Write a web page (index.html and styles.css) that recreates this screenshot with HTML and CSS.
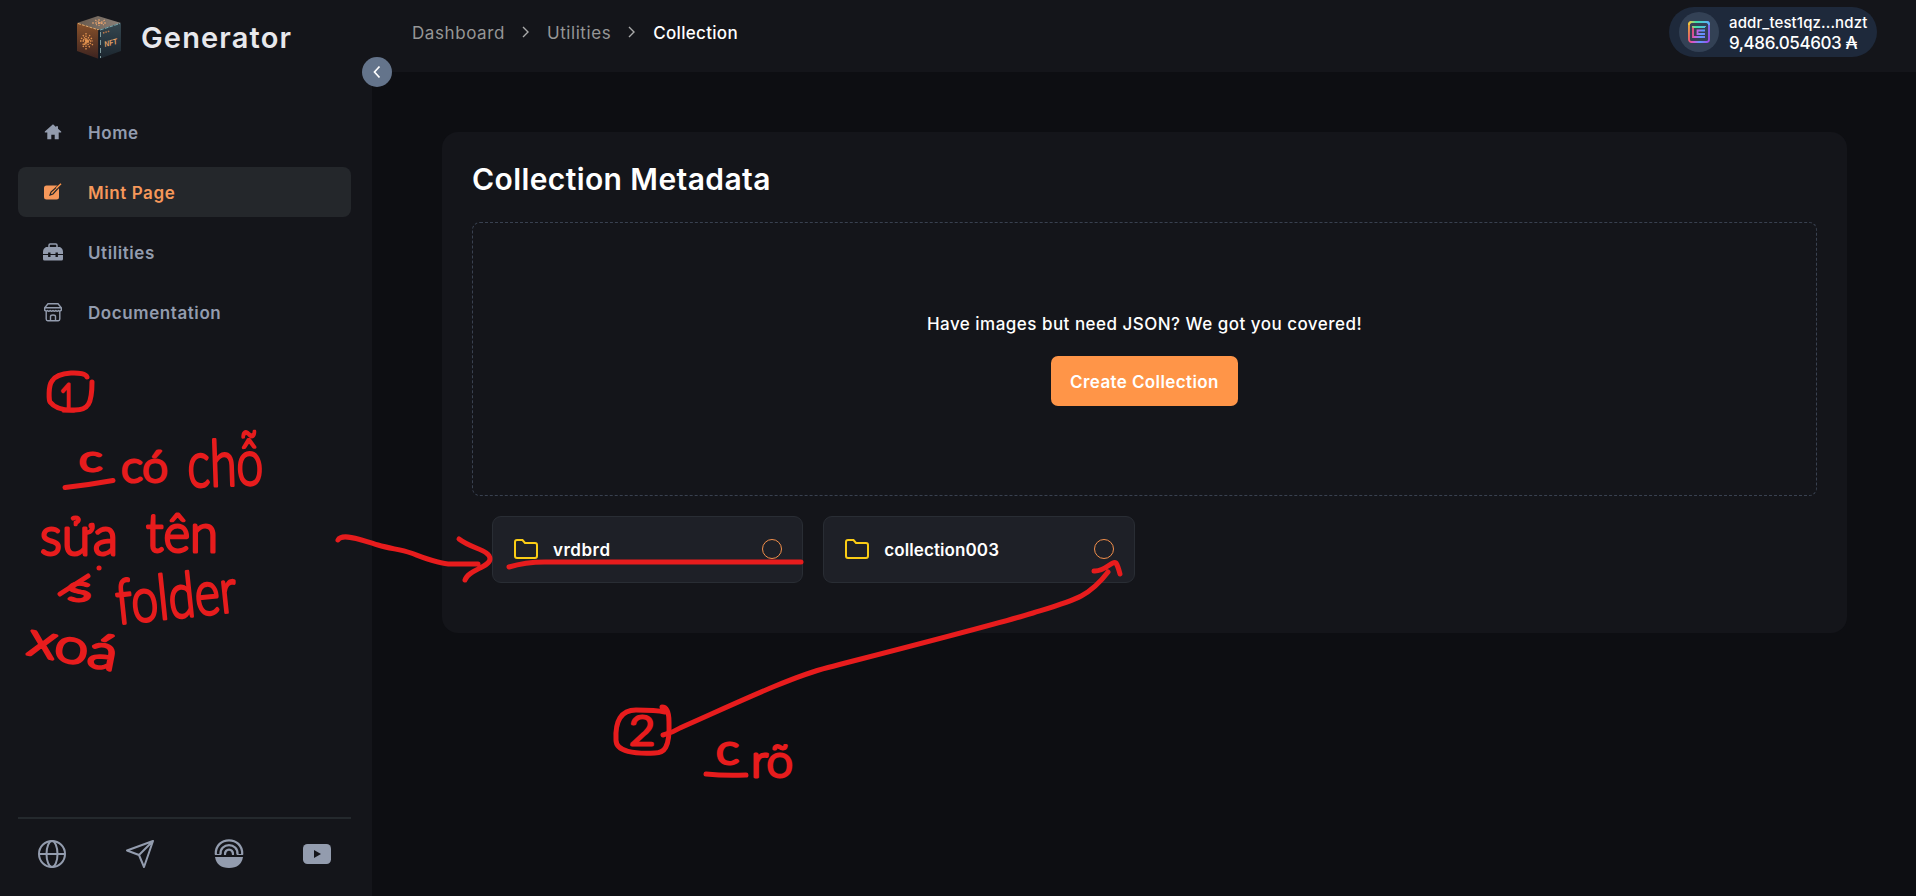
FILE: index.html
```html
<!DOCTYPE html>
<html lang="en">
<head>
<meta charset="utf-8">
<title>Generator</title>
<link rel="stylesheet" href="styles.css">
</head>
<body>
<div class="app">
  <aside class="sidebar">
    <div class="brand">
      <svg class="cube" viewBox="0 0 44 44">
        <defs>
          <linearGradient id="left" x1="0" y1="0" x2="0" y2="1"><stop offset="0" stop-color="#88512a"/><stop offset="1" stop-color="#3c2320"/></linearGradient>
          <linearGradient id="right" x1="0" y1="0" x2="0" y2="1"><stop offset="0" stop-color="#354750"/><stop offset="1" stop-color="#1b252e"/></linearGradient>
          <linearGradient id="top"><stop offset="0" stop-color="#66584c"/><stop offset="1" stop-color="#8b8179"/></linearGradient>
        </defs>
        <path d="M0 7L21 0 44 7 22 14z" fill="url(#top)"/>
        <path d="M0 7l22 7v29L0 35z" fill="url(#left)"/>
        <path d="M44 7l-22 7v29l22-8z" fill="url(#right)"/>
        <path d="M1 7.500l21 6.500" stroke="#e2ad72" stroke-dasharray="3 1"/>
        <path d="M23 14l20-6.500" stroke="#79a8ad" stroke-dasharray="4 1"/>
        <path d="M22 14v29" stroke="#071420" stroke-width="1.500"/>
        <path d="M23.500 16v26" stroke="#7f9a9c" stroke-dasharray="5 3"/>
        <path d="M3 25h13M6 19l7 13M13 19L6 31M9 17v17M4 22l12 7M15 22L5 29" stroke="#e3934f" stroke-width="1.300" stroke-dasharray="1.500 1"/>
        <path d="M15 7h15M18 4l9 5M28 4l-9 5M22 3v7" stroke="#eda56e" stroke-dasharray="2 1"/>
        <path d="M26 17l7-2" stroke="#c07a4b" stroke-width="1.500" stroke-dasharray="1.500 1"/>
        <text class="cube-label" x="28" y="31" textLength="13" lengthAdjust="spacingAndGlyphs" transform="rotate(-14 28 31)">NFT</text>
      </svg>
      <span class="brand-name">Generator</span>
    </div>
    <nav class="nav">
      <a class="nav-item"><svg class="nav-icon" viewBox="0 0 20 20" fill="currentColor"><path d="M10 2.200L1.800 9.500v.9h2.500v6.800h4v-4.400h3.400v4.400h4v-6.800h2.500v-.9l-3.200-2.800V4.300h-2v.6z"/></svg><span>Home</span></a>
      <a class="nav-item active"><svg class="nav-icon" viewBox="0 0 20 20"><rect x="1" y="3.500" width="15" height="14" rx="2.500" fill="currentColor"/><path d="M7 13l1-3 9.500-8.500 1 1L10 12z" fill="#ff9548" stroke="#24272b" stroke-width="1.200"/><path d="M13.500 6L18 1.800" stroke="#ff9548" stroke-width="1.500"/></svg><span>Mint Page</span></a>
      <a class="nav-item"><svg class="nav-icon" viewBox="0 0 20 20" fill="none"><path d="M6 5V3.200Q6 2 7.200 2h5.600Q14 2 14 3.200V5" stroke="currentColor" stroke-width="1.500"/><path d="M3 5h14q3 1.500 3 5v2H0v-2q0-3.500 3-5zM0 13h20v4q0 1.500-1.500 1.500h-17Q0 18.500 0 17z" fill="currentColor"/><path d="M6.300 10.500v4.500M13.700 10.500v4.500" stroke="#14151a" stroke-width="2.400"/></svg><span>Utilities</span></a>
      <a class="nav-item"><svg class="nav-icon" viewBox="0 0 20 20" fill="none" stroke="currentColor" stroke-width="1.400"><path d="M5 1.700h10l3.300 4v2.500q-1 1.200-2.700.4-1.400 1.200-2.800 0-1.400 1.200-2.800 0-1.400 1.200-2.800 0-1.400 1.200-2.800 0-1.700.8-2.700-.4V5.700zM2 5.700h16M3.200 9v8q0 1.700 1.500 1.700h10.600q1.500 0 1.500-1.700V9M7.500 18.500v-4q0-1.500 2.500-1.500t2.500 1.500v4"/></svg><span>Documentation</span></a>
    </nav>
    <div class="social">
      <svg class="social-icon" viewBox="0 0 28 28" fill="none" stroke="currentColor" stroke-width="2"><circle cx="14" cy="14" r="13"/><ellipse cx="14" cy="14" rx="5.500" ry="13"/><path d="M1 14h26"/></svg>
      <svg class="social-icon shift" viewBox="0 0 28 28" fill="none" stroke="currentColor" stroke-width="2" stroke-linejoin="round"><path d="M27 1L1 10.500 13 15l5 12zM27 1L13 15"/></svg>
      <svg class="social-icon wide shift" viewBox="0 0 30 30" fill="none" stroke="currentColor" stroke-width="2.300"><path d="M1.800 15.500C.8-3.300 29.200-3.300 28.200 15.500M6.500 15.500C5.500 3 24.500 3 23.500 15.500M11 15.500c-.5-6.500 8.500-6.500 8 0"/><path d="M1 15.500h6M10 15.500h2M18 15.500h2M23 15.500h6" stroke-width="1"/><path d="M1 18h28q-2 11-14 11T1 18z" fill="currentColor" stroke="none"/></svg>
      <svg class="social-icon wide" viewBox="0 0 30 30"><rect x="1" y="5" width="28" height="20" rx="4.500" fill="currentColor"/><path d="M12 11v8l7-4z" fill="#14151a"/></svg>
    </div>
    <button class="collapse"><svg viewBox="0 0 30 30" fill="none" stroke="#fff" stroke-width="1.700"><path d="M17.500 9.500L12.500 15l5 5.500"/></svg></button>
  </aside>
  <div class="content">
    <header class="topbar">
      <div class="crumbs">
        <span>Dashboard</span>
        <svg class="chevron" viewBox="0 0 8 14"><path d="M1 2l5 5-5 5"/></svg>
        <span>Utilities</span>
        <svg class="chevron" viewBox="0 0 8 14"><path d="M1 2l5 5-5 5"/></svg>
        <span class="current">Collection</span>
      </div>
      <div class="wallet">
        <div class="wallet-icon"><svg viewBox="0 0 22 22" fill="none" stroke="url(#rainbow)" stroke-width="1.800"><defs><linearGradient id="rainbow" gradientUnits="userSpaceOnUse" x1="0" y1="8" x2="22" y2="14"><stop offset="0" stop-color="#f5a83c"/><stop offset=".2" stop-color="#f4507c"/><stop offset=".42" stop-color="#c65ce0"/><stop offset=".65" stop-color="#5b9bff"/><stop offset="1" stop-color="#a24cf0"/></linearGradient><linearGradient id="rainbowTop"><stop offset="0" stop-color="#f5c83c"/><stop offset=".35" stop-color="#3fe0a8"/><stop offset="1" stop-color="#5bb0ff"/></linearGradient></defs><rect x="1" y="1" width="20" height="20" rx="2.500"/><path d="M17 6H5v10h12M17 9.500H9.500V13H17"/><path d="M1 4V3.500Q1 1 3.500 1h15Q21 1 21 3.500V4M5 6.500V6h12v.1" stroke="url(#rainbowTop)"/></svg></div>
        <div class="wallet-text"><span class="address">addr_test1qz...ndzt</span><span class="balance">9,486.054603 ₳</span></div>
      </div>
    </header>
    <main class="panel">
      <h1 class="title">Collection Metadata</h1>
      <section class="drop">
        <p class="hint">Have images but need JSON? We got you covered!</p>
        <button class="create">Create Collection</button>
      </section>
      <section class="folders">
        <div class="folder"><svg class="folder-icon" viewBox="0 0 24 20"><path d="M1 3q0-2 2-2h5.500L11 4h10q2 0 2 2v11q0 2-2 2H3q-2 0-2-2z"/></svg><span class="short-name">vrdbrd</span><i class="radio"></i></div>
        <div class="folder"><svg class="folder-icon" viewBox="0 0 24 20"><path d="M1 3q0-2 2-2h5.500L11 4h10q2 0 2 2v11q0 2-2 2H3q-2 0-2-2z"/></svg><span>collection003</span><i class="radio"></i></div>
      </section>
    </main>
  </div>
</div>
<svg class="ink" viewBox="0 0 1916 896">
  <g class="stroke">
    <path d="M87 377C85 371 58 371 52 381C48 386 49 401 50 402Q57 411 75 410C88 410 92 404 92 382"/>
    <path d="M65 487.500Q88 485 113 480.500M60 594L88 576M99 568h.1"/>
    <path d="M338 540C342 532 365 541 378 545S400 549 411 553S440 565 453 564H478M459 539C472 549 490 550 490 559C490 567 468 570 465 580"/>
    <path d="M509 567Q525 562 545 562H801"/>
    <path d="M662 707Q669 707 669 722C670 748 664 753 655 753C635 754 616 752 616 740C615 721 621 710 636 710Q656 710 665 712"/>
    <path d="M663 735Q672 733 680 728C728 707 790 677 828 667.500C880 654 990 626 1033 613C1075 600 1089 597 1108 572M1094 571C1105 572 1112 560 1116 563Q1118 566 1120 574"/>
    <path d="M706 774Q725 776 746 775"/>
  </g>
  <g class="hand">
    <text x="59" y="411" font-size="38" textLength="17" lengthAdjust="spacingAndGlyphs">1</text>
    <text x="79" y="471" font-size="35" textLength="23" lengthAdjust="spacingAndGlyphs">c</text>
    <text x="121" y="482" font-size="44" textLength="47" lengthAdjust="spacingAndGlyphs">có</text>
    <text x="188" y="487" font-size="64" textLength="76" lengthAdjust="spacingAndGlyphs" transform="rotate(-2 188 487)">chỗ</text>
    <text x="40" y="555" font-size="54" textLength="78" lengthAdjust="spacingAndGlyphs">sửa</text>
    <text x="146" y="552" font-size="54" textLength="72" lengthAdjust="spacingAndGlyphs">tên</text>
    <text x="67" y="601" font-size="36" textLength="24" lengthAdjust="spacingAndGlyphs">s</text>
    <text x="118" y="624" font-size="62" textLength="121" lengthAdjust="spacingAndGlyphs" transform="rotate(-6 118 624)">folder</text>
    <text x="26" y="654" font-size="48" textLength="90" lengthAdjust="spacingAndGlyphs" transform="rotate(11 26 654)">xoá</text>
    <text x="629" y="745" font-size="41" textLength="26" lengthAdjust="spacingAndGlyphs">2</text>
    <text x="716" y="764" font-size="41" textLength="23" lengthAdjust="spacingAndGlyphs">c</text>
    <text x="751" y="777" font-size="46" textLength="42" lengthAdjust="spacingAndGlyphs">rõ</text>
  </g>
</svg>
</body>
</html>
```
FILE: styles.css
```css
* { box-sizing: border-box; }
body { margin: 0; background: #0d0e12; color: #fff; font: 500 17px/24px Inter, sans-serif; overflow: hidden; }
button { border: 0; padding: 0; font: inherit; color: inherit; }
.app { display: flex; height: 896px; }
.sidebar { position: relative; width: 372px; flex: none; display: flex; flex-direction: column; padding: 0 20px 0 18px; background: #14151a; color: #939cae; }
.brand { display: flex; align-items: center; height: 75px; padding-left: 59px; gap: 20px; }
.cube { width: 44px; height: 44px; fill: none; }
.cube-label { font: italic 700 8px "Liberation Sans", sans-serif; fill: #e9a468; }
.brand-name { color: #e8e8ec; font-size: 29px; font-weight: 600; line-height: 40px; letter-spacing: 1.15px; }
.nav { display: flex; flex-direction: column; gap: 10px; padding-top: 32px; width: 333px; }
.nav-item { display: flex; align-items: center; height: 50px; padding-left: 25px; gap: 25px; border-radius: 8px; font-weight: 600; letter-spacing: .58px; }
.nav-item span { padding-top: 2px; }
.nav-icon { width: 20px; height: 20px; }
.active { background: #24272b; color: #f6985a; }
.social { margin-top: auto; width: 333px; height: 79px; border-top: 2px solid #24292d; padding: 19px 19px 0 20px; display: flex; justify-content: space-between; align-items: flex-start; }
.social-icon { width: 28px; height: 28px; margin-top: 2px; }
.social-icon.wide { width: 30px; height: 30px; margin-top: 1px; }
.social-icon.shift { transform: translateX(1px); }
.collapse { position: absolute; left: 362px; top: 57px; width: 30px; height: 30px; border-radius: 50%; background: #64748b; }
.collapse svg { display: block; width: 30px; height: 30px; }
.content { flex: 1; min-width: 0; }
.topbar { display: flex; justify-content: space-between; align-items: flex-start; height: 72px; padding: 7px 39px 0 40px; background: #14151a; }
.crumbs { display: flex; align-items: center; height: 52px; color: #969696; font-weight: 400; letter-spacing: .58px; }
.chevron { width: 8px; height: 14px; margin: 0 17px 3px 17px; fill: none; stroke: #aaa; stroke-width: 1.400; }
.current { color: #fff; font-weight: 500; letter-spacing: .3px; }
.wallet { display: flex; align-items: center; gap: 10px; width: 208px; height: 50px; padding-left: 10px; border-radius: 25px; background: #1e293b; }
.wallet-icon { display: grid; place-items: center; width: 40px; height: 40px; border-radius: 50%; background: #334155; }
.wallet-icon svg { width: 22px; height: 22px; }
.wallet-text { display: flex; flex-direction: column; line-height: 21px; padding-top: 1px; white-space: nowrap; }
.address { font-size: 15px; letter-spacing: .12px; }
.balance { font-size: 17px; letter-spacing: -.4px; }
.panel { width: 1405px; height: 501px; margin: 60px 0 0 70px; padding: 30px; background: #14151a; border-radius: 16px; }
.title { margin: 0; height: 60px; font-size: 30px; line-height: 34px; font-weight: 600; letter-spacing: .4px; }
.drop { display: flex; flex-direction: column; align-items: center; justify-content: center; gap: 20px; height: 274px; border: 1px dashed #394150; border-radius: 8px; }
.hint { margin: 0; letter-spacing: .48px; }
.create { width: 187px; height: 50px; padding-top: 2px; border-radius: 7px; background: #ff9548; font-weight: 600; letter-spacing: .4px; }
.folders { display: grid; grid-template-columns: repeat(4, 1fr); gap: 20px; padding: 20px; }
.folder { display: flex; align-items: center; height: 67px; padding: 0 20px 0 21px; border: 1px solid #292d34; border-radius: 9px; background: #1e2027; font-weight: 600; letter-spacing: .1px; }
.short-name { letter-spacing: .5px; }
.folder-icon { width: 24px; height: 20px; margin: 0 15px 2px 0; fill: none; stroke: #facc15; stroke-width: 2; }
.radio { width: 20px; height: 20px; margin: 0 0 1px auto; border: 1px solid #f28f4b; border-radius: 50%; }
.ink { position: absolute; left: 0; top: 0; width: 1916px; height: 896px; pointer-events: none; }
.stroke { fill: none; stroke: #e71c1d; stroke-width: 5; stroke-linecap: round; stroke-linejoin: round; }
.hand { font-family: Lato, sans-serif; font-weight: 300; fill: #e71c1d; stroke: #e71c1d; stroke-width: 3; stroke-linejoin: round; }
```
